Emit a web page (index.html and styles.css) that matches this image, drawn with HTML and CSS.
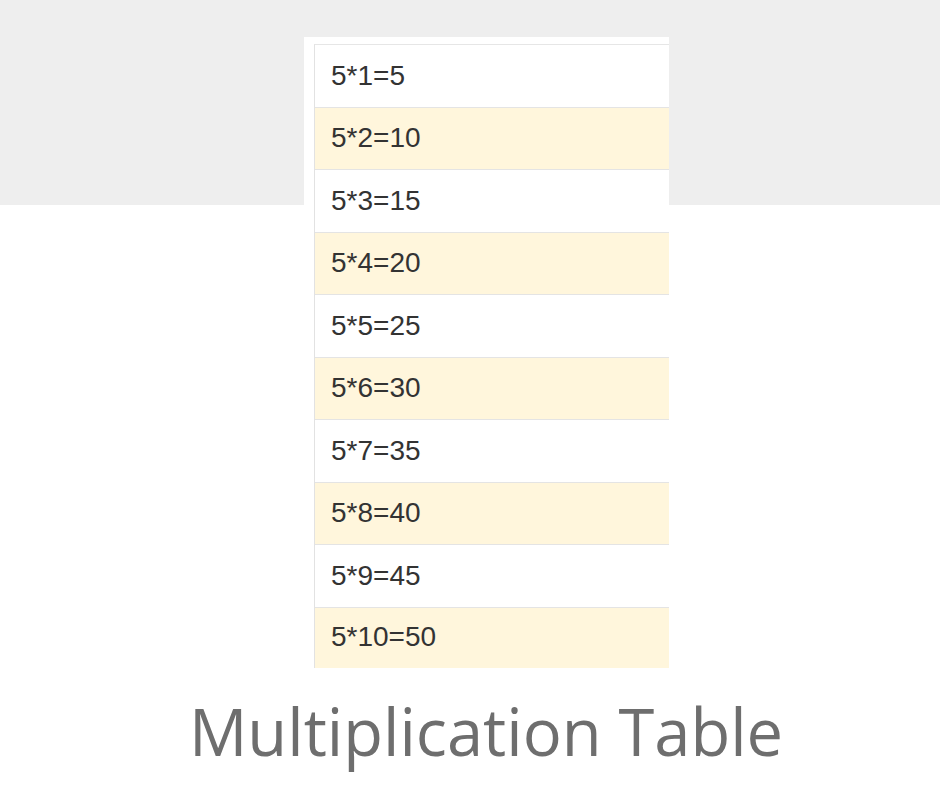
FILE: index.html
```html
<!DOCTYPE html>
<html>
<head>
<meta charset="utf-8">
<link rel="stylesheet" href="styles.css">
</head>
<body>
<div class="page">
  <div class="panel">
    <div class="table">
      <div class="row">5*1=5</div>
      <div class="row alt">5*2=10</div>
      <div class="row">5*3=15</div>
      <div class="row alt">5*4=20</div>
      <div class="row">5*5=25</div>
      <div class="row alt">5*6=30</div>
      <div class="row">5*7=35</div>
      <div class="row alt">5*8=40</div>
      <div class="row">5*9=45</div>
      <div class="row alt last">5*10=50</div>
    </div>
  </div>
  <h1 class="title">Multiplication Table</h1>
</div>
</body>
</html>
```
FILE: styles.css
```css
html, body {
  margin: 0;
  padding: 0;
  background: #ffffff;
}
.page {
  width: 940px;
  height: 788px;
  overflow: hidden;
  background: linear-gradient(#eeeeee 0, #eeeeee 205px, #ffffff 205px);
  padding-top: 37px;
  box-sizing: border-box;
}
.panel {
  margin-left: 304px;
  width: 365px;
  background: #ffffff;
  padding: 7px 0 0 10px;
  box-sizing: border-box;
}
.table {
  border-left: 1px solid #e2e2e2;
  border-top: 1px solid #e6e6e6;
}
.row {
  height: 62.5px;
  box-sizing: border-box;
  display: flex;
  align-items: center;
  padding-left: 16px;
  font-family: "Liberation Sans", Arial, sans-serif;
  font-size: 28px;
  color: #333333;
  border-bottom: 1px solid #e4e4e4;
  background: #ffffff;
}
.row.alt {
  background: #fff6dc;
}
.row.last {
  height: 60px;
  padding-bottom: 2px;
  border-bottom: none;
}
.title {
  margin: 18px 0 0 0;
  padding-left: 32px;
  text-align: center;
  font-family: "Open Sans", sans-serif;
  font-weight: 400;
  font-size: 65px;
  line-height: 90px;
  color: #6e6e6e;
}
```
